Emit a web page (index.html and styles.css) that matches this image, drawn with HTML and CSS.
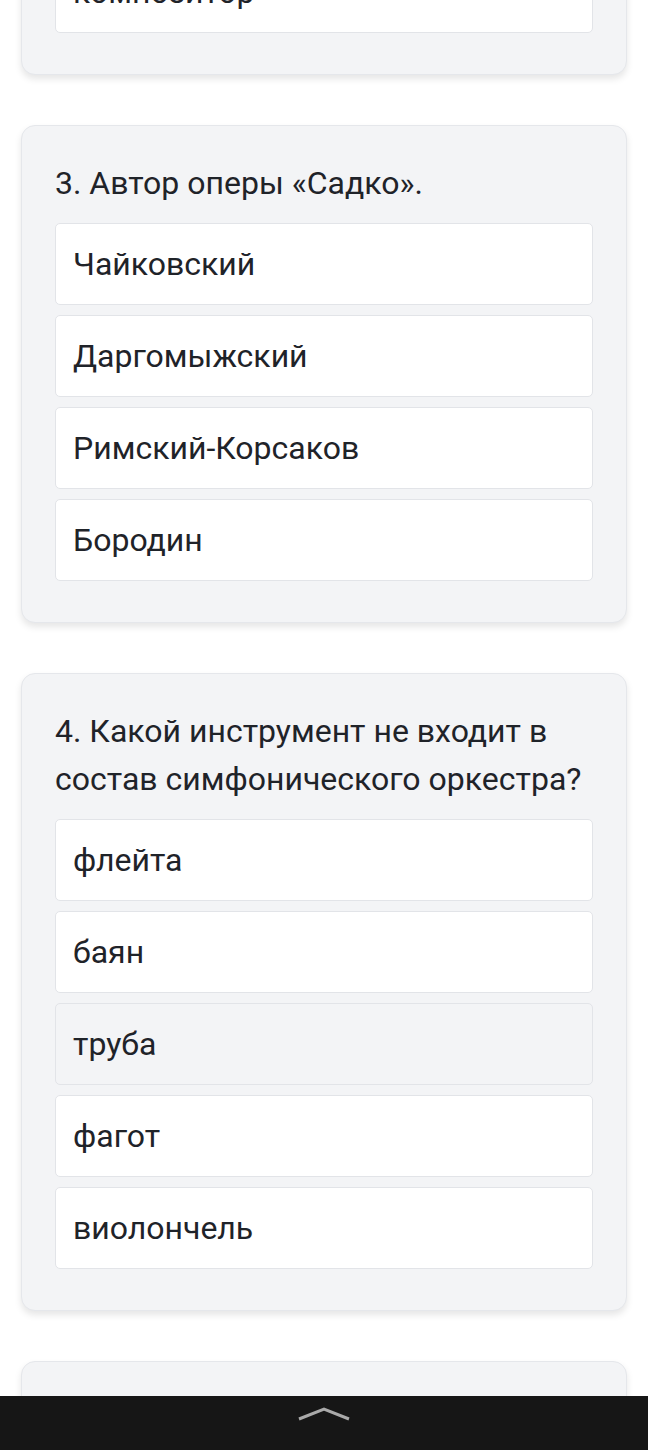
FILE: index.html
```html
<!DOCTYPE html>
<html lang="ru">
<head>
  <meta charset="UTF-8" />
  <meta name="viewport" content="width=device-width, initial-scale=1.0" />
  <title>Тест по музыке</title>
  <link rel="stylesheet" href="styles.css">
</head>
<body>

  <main class="quiz">
    <section class="question-card first">
      <div class="options">
        <div class="option">композитор</div>
      </div>
    </section>

    <section class="question-card">
      <h3 class="question">3. Автор оперы «Садко».</h3>
      <div class="options">
        <div class="option">Чайковский</div>
        <div class="option">Даргомыжский</div>
        <div class="option">Римский-Корсаков</div>
        <div class="option">Бородин</div>
      </div>
    </section>

    <section class="question-card">
      <h3 class="question">4. Какой инструмент не входит в состав симфонического оркестра?</h3>
      <div class="options">
        <div class="option">флейта</div>
        <div class="option">баян</div>
        <div class="option hover">труба</div>
        <div class="option">фагот</div>
        <div class="option">виолончель</div>
      </div>
    </section>

    <section class="question-card last"></section>
  </main>

  <div class="nav-bar">
    <svg width="56" height="16" viewBox="0 0 56 16">
      <path d="M3 13 L28 3 L53 13" fill="none" stroke="#a9a9a9" stroke-width="3" />
    </svg>
  </div>

</body>
</html>
```

FILE: styles.css
```css
body {
  font-family: Roboto, "Noto Sans", sans-serif;
  margin: 0;
  background-color: #ffffff;
  color: #1f2329;
  overflow: hidden;
}

.quiz {
  display: flex;
  flex-direction: column;
  gap: 50px;
  padding: 0 21px;
}

.question-card {
  background-color: #f3f4f6;
  border: 1px solid #e5e7eb;
  border-radius: 14px;
  padding: 33px 33px 41px;
  box-shadow: 0 4px 7px rgba(0, 0, 0, 0.1);
}
.question-card.first {
  margin-top: -83px;
}
.question-card.last {
  height: 200px;
}

.question {
  font-size: 32px;
  font-weight: 400;
  line-height: 48px;
  margin: 0 0 16px;
}

.options {
  display: flex;
  flex-direction: column;
  gap: 10px;
}
.option {
  background-color: #ffffff;
  border: 1px solid #e2e4e8;
  border-radius: 5px;
  padding: 16px 17px;
  font-size: 32px;
  line-height: 48px;
}
.option.hover {
  background-color: #f3f4f6;
}

.nav-bar {
  position: fixed;
  left: 0;
  right: 0;
  bottom: 0;
  height: 54px;
  background-color: #161616;
  display: flex;
  justify-content: center;
  padding-top: 10px;
  box-sizing: border-box;
}
```
